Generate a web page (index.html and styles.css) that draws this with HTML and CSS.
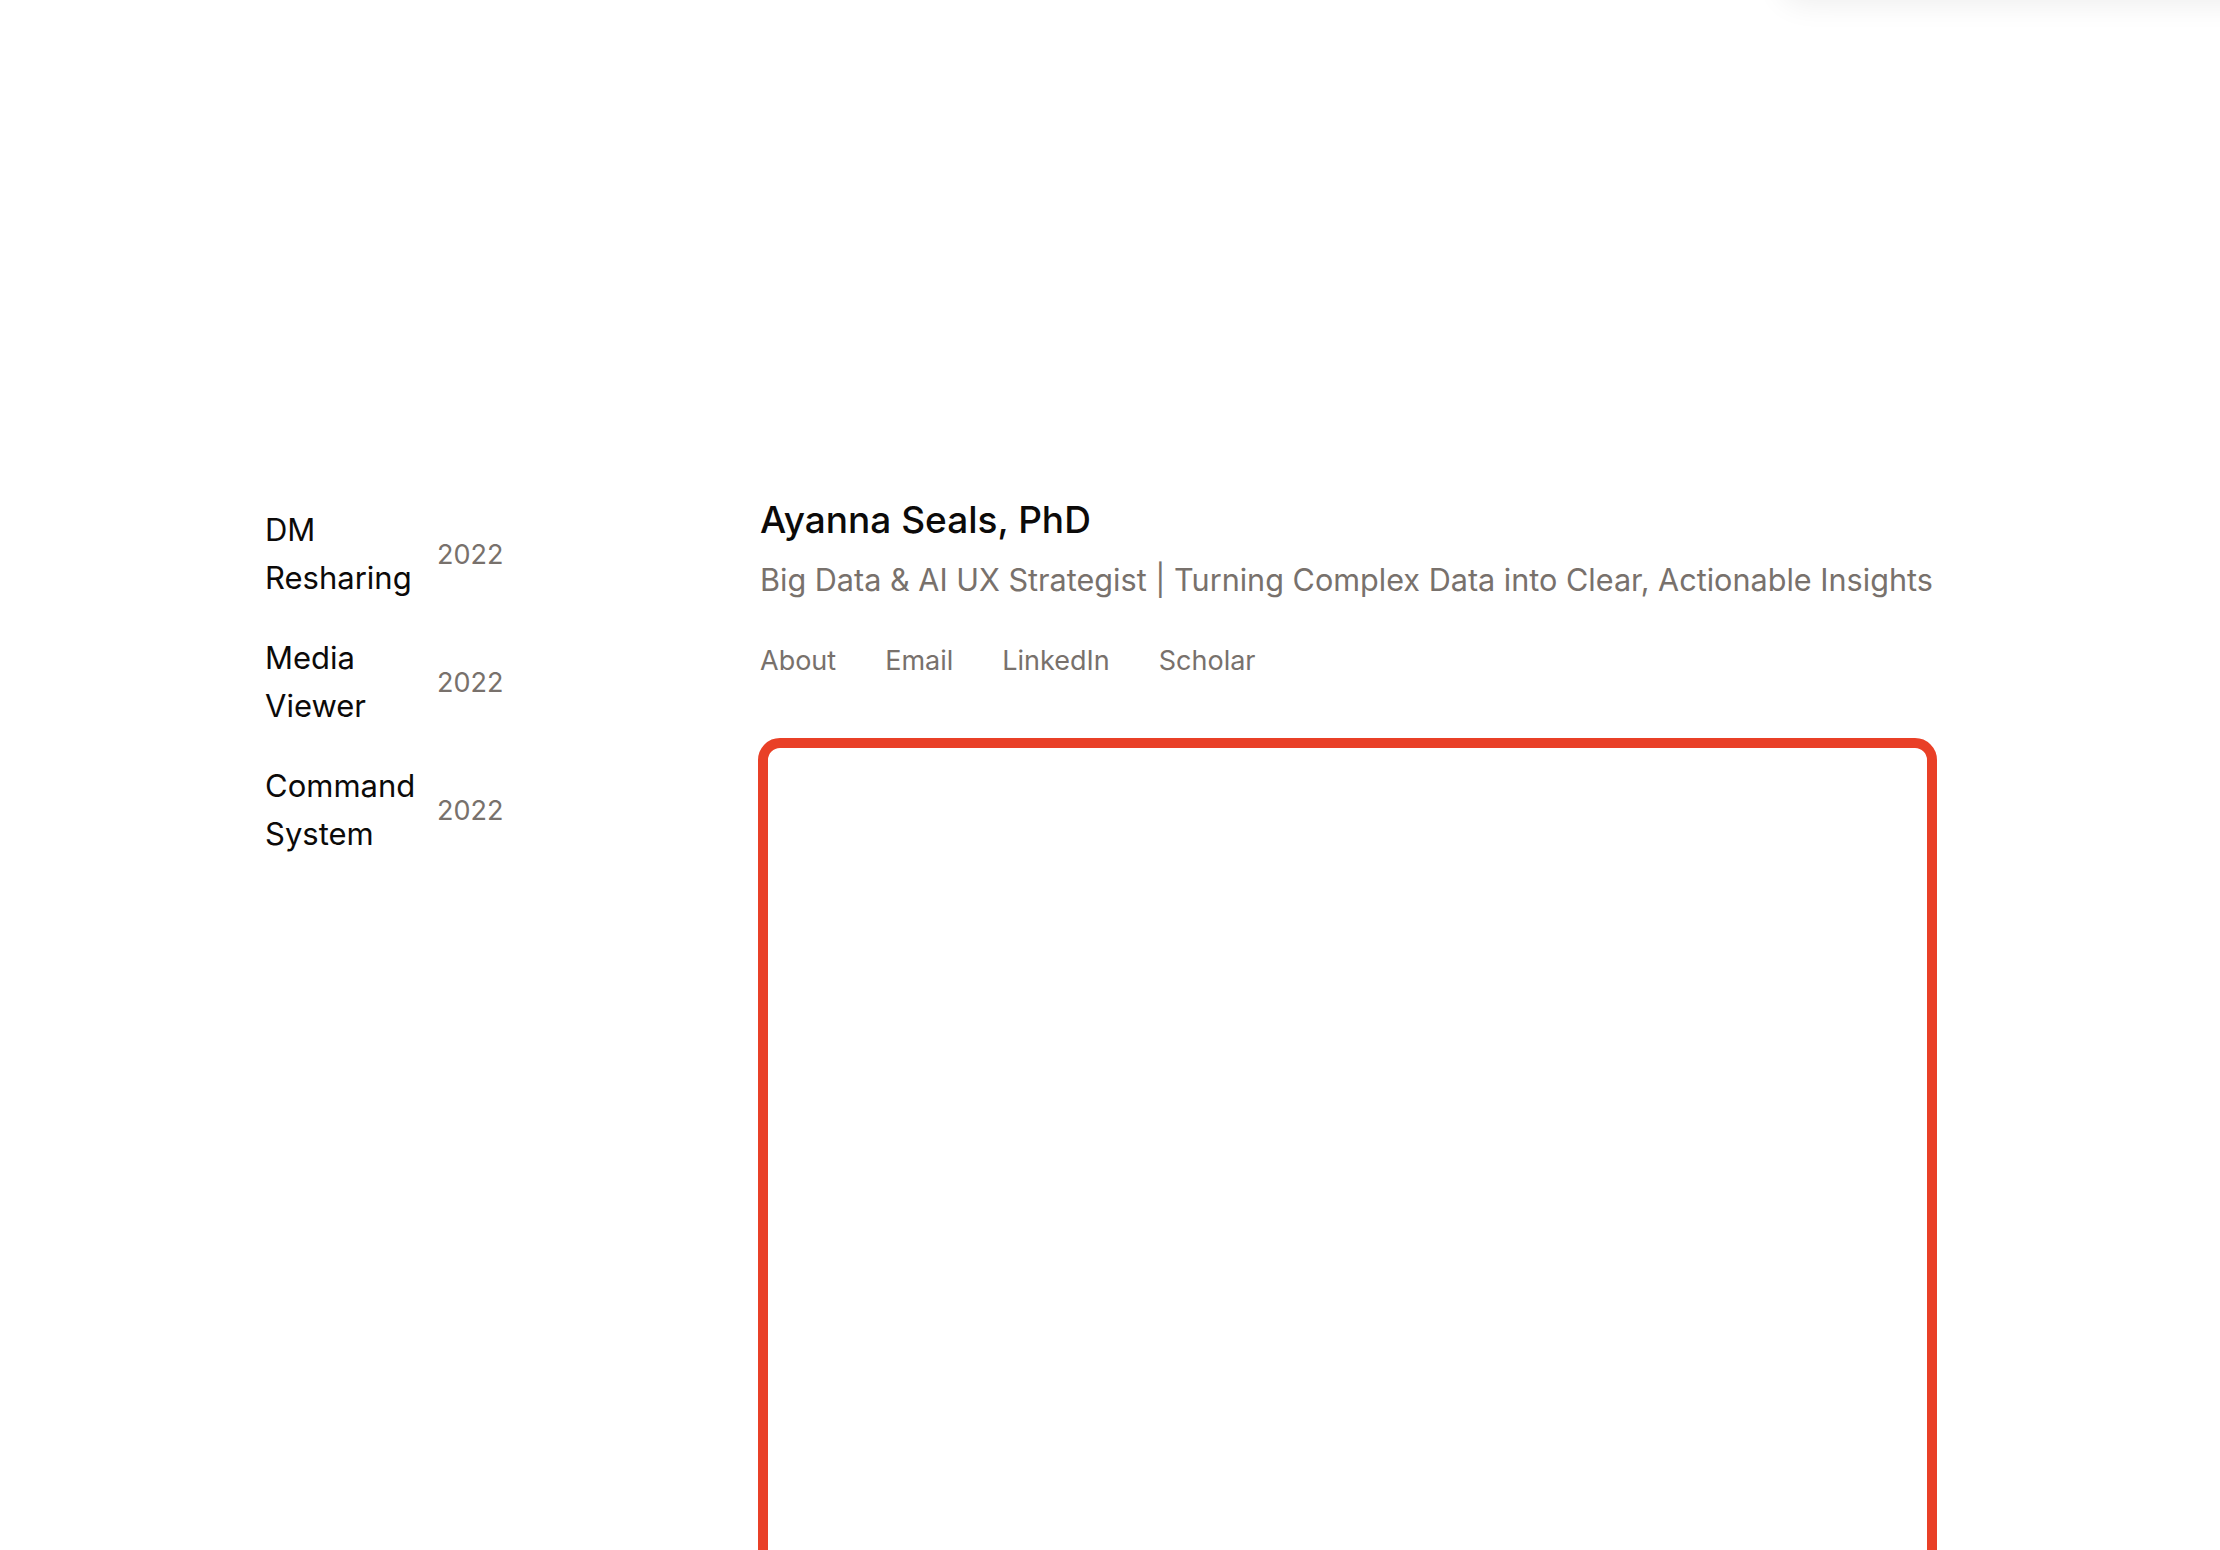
FILE: index.html
```html
<!DOCTYPE html>
<html lang="en">
<head>
<meta charset="utf-8">
<title>Ayanna Seals, PhD</title>
<link rel="stylesheet" href="styles.css">
</head>
<body>
<div class="toast"></div>
<div class="page">
  <aside class="sidebar">
    <a class="project" href="#"><span class="project-title">DM Resharing</span><span class="project-year">2022</span></a>
    <a class="project" href="#"><span class="project-title">Media Viewer</span><span class="project-year">2022</span></a>
    <a class="project" href="#"><span class="project-title">Command System</span><span class="project-year">2022</span></a>
  </aside>
  <main class="main">
    <h1 class="name">Ayanna Seals, PhD</h1>
    <p class="tagline">Big Data &amp; AI UX Strategist | Turning Complex Data into Clear, Actionable Insights</p>
    <nav class="links">
      <a href="#">About</a>
      <a href="#">Email</a>
      <a href="#">LinkedIn</a>
      <a href="#">Scholar</a>
    </nav>
    <div class="frame"></div>
  </main>
</div>
</body>
</html>
```

FILE: styles.css
```css
* { box-sizing: border-box; }
html, body { margin: 0; padding: 0; background: #ffffff; }
body {
  font-family: Inter, "Noto Sans", "Liberation Sans", sans-serif;
  color: #0c0a09;
  position: relative;
}
a { text-decoration: none; color: inherit; }

.toast {
  position: absolute;
  top: -120px;
  left: 1780px;
  width: 520px;
  height: 120px;
  background: #fff;
  border-radius: 24px;
  box-shadow: 0 4px 30px rgba(0, 0, 0, 0.07);
}

.page {
  display: flex;
  padding: 496px 0 0 265px;
}

.sidebar {
  width: 493px;
  display: flex;
  flex-direction: column;
  gap: 32px;
  padding-top: 10px;
}
.project {
  display: flex;
  align-items: center;
  gap: 16px;
}
.project-title {
  width: 156px;
  font-size: 31px;
  line-height: 48px;
  color: #0c0a09;
}
.project-year {
  font-size: 27px;
  color: #78716c;
}

.main {
  width: 1179px;
  display: flex;
  flex-direction: column;
}
.name, .tagline, .links {
  padding-left: 2px;
}
.name {
  margin: 0;
  font-size: 37px;
  font-weight: 500;
  line-height: 48px;
  color: #0c0a09;
}
.tagline {
  margin: 14px 0 0;
  font-size: 30.6px;
  line-height: 44px;
  color: #78716c;
  white-space: nowrap;
}
.links {
  display: flex;
  gap: 49px;
  margin-top: 39px;
  font-size: 27px;
  line-height: 40px;
  color: #78716c;
}
.frame {
  margin-top: 57px;
  height: 860px;
  border: 10px solid #e94027;
  border-radius: 22px;
}
```
